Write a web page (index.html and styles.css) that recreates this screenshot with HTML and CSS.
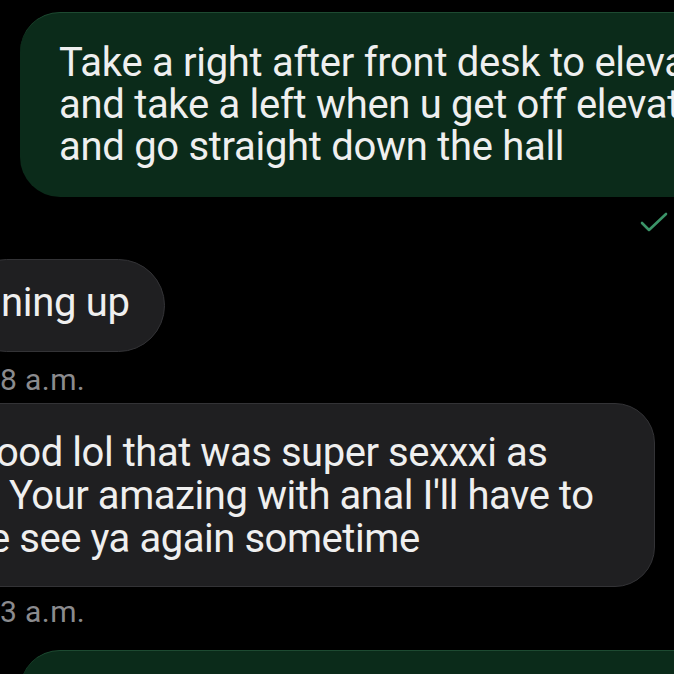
FILE: index.html
```html
<!DOCTYPE html>
<html>
<head>
<meta charset="utf-8">
<link rel="stylesheet" href="styles.css">
</head>
<body>
<div class="chat">
  <div class="bubble sent first">
    <div class="line">Take a right after front desk to elevator</div>
    <div class="line">and take a left when u get off elevator</div>
    <div class="line">and go straight down the hall</div>
  </div>
  <div class="status">
    <svg class="check" width="28" height="22" viewBox="0 0 28 22"><polyline points="2,12 9,19 26,3" fill="none" stroke="#3b9468" stroke-width="2.6" stroke-linecap="round" stroke-linejoin="round"/></svg>
  </div>
  <div class="bubble recv short">
    <div class="line">ning up</div>
  </div>
  <div class="time t1">8 a.m.</div>
  <div class="bubble recv long">
    <div class="line l1">ood lol that was super sexxxi as</div>
    <div class="line l2">Your amazing with anal I'll have to</div>
    <div class="line l3">e see ya again sometime</div>
  </div>
  <div class="time t2">3 a.m.</div>
  <div class="bubble sent last"></div>
</div>
</body>
</html>
```
FILE: styles.css
```css
html, body {
  margin: 0;
  padding: 0;
  background: #000;
  overflow: hidden;
  width: 674px;
  height: 674px;
}
.chat {
  display: flex;
  flex-direction: column;
  align-items: flex-start;
  font-family: Roboto, "Liberation Sans", sans-serif;
  color: #efefef;
  padding-top: 12px;
}
.bubble {
  box-sizing: border-box;
  font-size: 40px;
  letter-spacing: -0.3px;
  line-height: 42px;
  white-space: nowrap;
  overflow: hidden;
}
.sent {
  background: #0b2b1a;
  border-top: 1px solid #1d4a31;
  border-radius: 40px;
  margin-left: 20px;
  width: 720px;
  padding: 29px 40px 28px 39px;
}
.first { height: 185px; }
.status {
  align-self: stretch;
  display: flex;
  justify-content: flex-end;
  padding: 14px 6px 0 0;
  height: 46px;
  box-sizing: border-box;
}
.recv {
  background: #1f1f21;
  border: 1px solid #333336;
  margin-left: -40px;
}
.short {
  border-radius: 47px;
  width: 205px;
  height: 93px;
  padding: 22px 0 0 40px;
  margin-top: 16px;
}
.long {
  border-radius: 40px;
  width: 695px;
  height: 184px;
  padding: 27px 0 0 40px;
  line-height: 43px;
  letter-spacing: -0.45px;
}
.l1 { text-indent: -5px; }
.l2 { text-indent: 8px; }
.l3 { text-indent: -12px; }
.time {
  font-size: 30px;
  letter-spacing: 0.4px;
  line-height: 32px;
  color: #8b8b8e;
}
.t1 { margin: 12px 0 7px 0; }
.t2 { margin: 9px 0 22px 0; }
.last {
  height: 80px;
  padding: 0;
  border-radius: 40px;
}
```
